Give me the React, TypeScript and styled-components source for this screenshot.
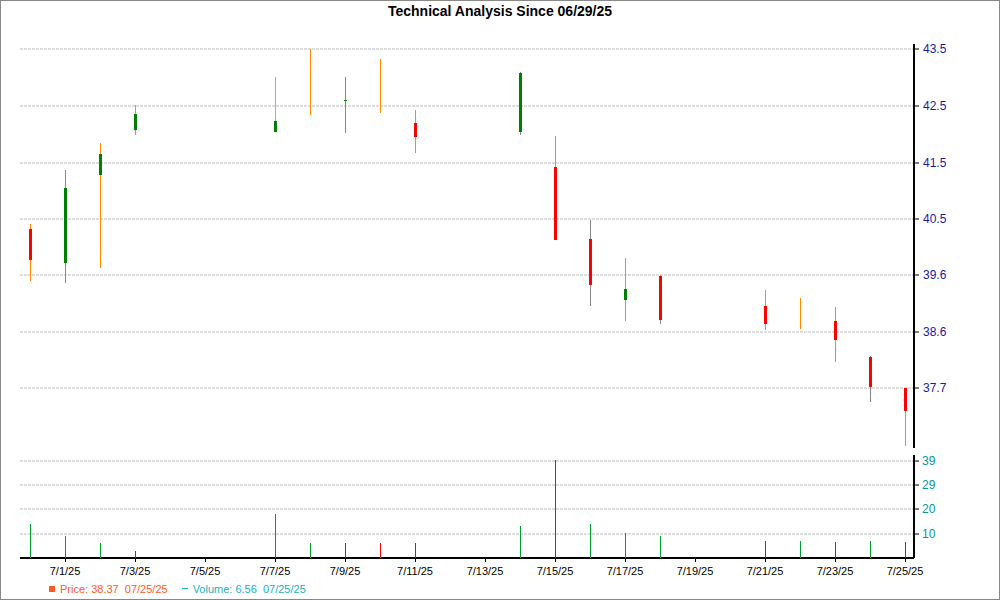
import React from "react";
import styled, { createGlobalStyle } from "styled-components";

const G = createGlobalStyle`
  body { margin: 0; background: #fff; font-family: "Liberation Sans", Arial, sans-serif; }
`;
const Frame = styled.div`
  width: 1000px; height: 600px; box-sizing: border-box; border: 1px solid #888;
  display: flex; flex-direction: column; background: #fff;
`;
const Title = styled.div`
  height: 20px; line-height: 20px; text-align: center; font-weight: bold; font-size: 14px; color: #000;
`;
const Legend = styled.div`
  height: 21px; display: flex; align-items: center; gap: 14px; padding-left: 48px; font-size: 11px;
`;
const Item = styled.span<{ c: string }>`color: ${p => p.c}; display: flex; align-items: center; gap: 5px;`;
const Mark = styled.span<{ c: string; h: number }>`display: inline-block; width: 6px; height: ${p => p.h}px; background: ${p => p.c};`;

const RED = "#ff0000", GREEN = "#008000", OR = "#ff8c00";
type C = [number, number, number, number?, number?, string?, string?];
const candles: C[] = [
  [30, 224, 281, 229, 260, RED, OR], [65, 170, 283, 188, 263, GREEN, "#888"], [100, 143, 268, 154, 175, GREEN, OR],
  [135, 105, 135, 114, 130, GREEN, OR], [275, 77, 132, 121, 132, GREEN, "#aaa"], [310, 49, 115, undefined, undefined, undefined, OR],
  [345, 77, 133, 100, 101, GREEN, "#888"], [380, 59, 113, undefined, undefined, undefined, OR], [415, 110, 153, 123, 137, RED, OR],
  [520, 72, 135, 73, 132, GREEN, "#888"], [555, 136, 240, 167, 240, RED, OR], [590, 220, 306, 239, 285, RED, "#888"],
  [625, 258, 321, 289, 300, GREEN, OR], [660, 275, 324, 276, 320, RED, "#888"], [765, 290, 330, 306, 324, RED, OR],
  [800, 298, 329, undefined, undefined, undefined, OR], [835, 307, 362, 321, 340, RED, OR], [870, 356, 402, 357, 387, RED, "#888"],
  [905, 388, 446, 388, 411, RED, OR],
];
const vols: [number, number, string][] = [
  [30, 524, "#00a030"], [65, 536, "#00a030"], [100, 543, "#00a030"], [135, 551, RED], [275, 514, "#00a030"], [310, 543, "#00a030"],
  [345, 543, RED], [380, 543, RED], [415, 543, RED], [520, 526, "#00a030"], [555, 460, RED], [590, 524, "#00a030"],
  [625, 533, "#00a030"], [660, 536, "#00a030"], [765, 541, RED], [800, 541, "#00a030"], [835, 542, RED], [870, 541, "#00a030"], [905, 542, RED],
];
const pGrid: [number, string][] = [[49, "43.5"], [106, "42.5"], [163, "41.5"], [219, "40.5"], [275, "39.6"], [332, "38.6"], [388, "37.7"]];
const vGrid: [number, string][] = [[461, "39"], [485, "29"], [509, "20"], [534, "10"]];
const dates = ["7/1/25", "7/3/25", "7/5/25", "7/7/25", "7/9/25", "7/11/25", "7/13/25", "7/15/25", "7/17/25", "7/19/25", "7/21/25", "7/23/25", "7/25/25"];

export default function App() {
  return (
    <Frame>
      <G />
      <Title>Technical Analysis Since 06/29/25</Title>
      <svg width={998} height={557} viewBox="1 21 998 557" style={{ display: "block" }} fontFamily="Liberation Sans, Arial, sans-serif">
        {pGrid.map(([y, l]) => (
          <g key={l}>
            <line x1={20} x2={914} y1={y} y2={y} stroke="#bbb" strokeDasharray="3 1" />
            <line x1={914} x2={919} y1={y} y2={y} stroke="#000" />
            <text x={923} y={y + 4} fontSize={12} fill="#1a1aa0">{l}</text>
          </g>
        ))}
        {vGrid.map(([y, l]) => (
          <g key={l}>
            <line x1={20} x2={914} y1={y} y2={y} stroke="#bbb" strokeDasharray="3 1" />
            <line x1={914} x2={919} y1={y} y2={y} stroke="#000" />
            <text x={922} y={y + 4} fontSize={12} fill="#009999">{l}</text>
          </g>
        ))}
        <line x1={914} x2={914} y1={44} y2={448} stroke="#000" strokeWidth={2} />
        <line x1={914} x2={914} y1={455} y2={558} stroke="#000" strokeWidth={2} />
        <line x1={20} x2={914} y1={558} y2={558} stroke="#000" strokeWidth={2} />
        {candles.map(([x, h, l, t, b, c, w], i) => (
          <g key={i}>
            <line x1={x + 0.5} x2={x + 0.5} y1={h} y2={l} stroke={w} />
            {t !== undefined && <rect x={x - 1} y={t} width={3} height={Math.max(1, (b as number) - t)} fill={c} />}
          </g>
        ))}
        {vols.map(([x, y, c], i) => <line key={i} x1={x + 0.5} x2={x + 0.5} y1={y} y2={558} stroke={c} />)}
        {dates.map((d, i) => (
          <g key={d}>
            <line x1={65 + i * 70 + 0.5} x2={65 + i * 70 + 0.5} y1={558} y2={562} stroke="#000" />
            <text x={65 + i * 70} y={575} fontSize={11} textAnchor="middle" fill="#000">{d}</text>
          </g>
        ))}
      </svg>
      <Legend>
        <Item c="#ff5a1f"><Mark c="#ff5a1f" h={6} />Price: 38.37&nbsp; 07/25/25</Item>
        <Item c="#1ab0c0"><Mark c="#1ab0c0" h={1} />Volume: 6.56&nbsp; 07/25/25</Item>
      </Legend>
    </Frame>
  );
}
